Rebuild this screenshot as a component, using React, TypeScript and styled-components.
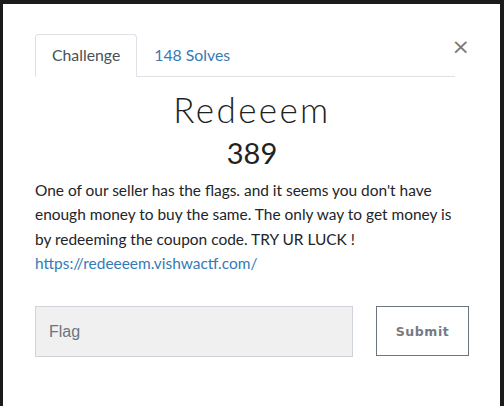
import React from 'react';
import styled, { createGlobalStyle } from 'styled-components';

const GlobalStyle = createGlobalStyle`
  html, body {
    margin: 0;
    padding: 0;
    background: #1b1b1b;
  }
  * {
    box-sizing: border-box;
  }
`;

// Component styles

const Backdrop = styled.div`
  width: 504px;
  height: 406px;
  padding: 4px 4px 0 3px;
  overflow: hidden;
`;

const Modal = styled.div`
  position: relative;
  height: 100%;
  background: #fff;
  padding: 30px 31px 0 32px;
  font-family: Lato, "Open Sans", sans-serif;
  color: #212529;
`;

const CloseButton = styled.button`
  position: absolute;
  top: 32px;
  right: 30px;
  border: 0;
  background: transparent;
  padding: 0;
  font-family: "DejaVu Sans", sans-serif;
  font-size: 22px;
  line-height: 1;
  color: #7a7a7a;
  cursor: pointer;
`;

const TabList = styled.ul`
  display: flex;
  margin: 0 14px 0 0;
  padding: 0;
  list-style: none;
  border-bottom: 1px solid #dee2e6;
`;

interface TabProps {
  active?: boolean;
}

const Tab = styled.li<TabProps>`
  margin-bottom: -1px;
  padding: 10px 16px 11px;
  font-size: 15.8px;
  line-height: 20px;
  border: 1px solid ${(p) => (p.active ? '#dee2e6' : 'transparent')};
  border-bottom-color: ${(p) => (p.active ? '#fff' : 'transparent')};
  border-radius: 4px 4px 0 0;
  background: ${(p) => (p.active ? '#fff' : 'transparent')};
  color: ${(p) => (p.active ? '#495057' : '#337ab7')};
  cursor: pointer;
`;

const Body = styled.div`
  display: flex;
  flex-direction: column;
  align-items: center;
  padding-top: 11px;
`;

const Title = styled.h3`
  margin: 0;
  font-size: 35px;
  font-weight: 300;
  letter-spacing: 2.4px;
  line-height: 42px;
  color: #1f1f1f;
`;

const Points = styled.h4`
  margin: 6px 0 0;
  font-size: 29px;
  font-weight: 400;
  line-height: 34px;
  color: #222;
`;

const Description = styled.p`
  align-self: stretch;
  margin: 8px 0 0;
  font-size: 15.45px;
  line-height: 24.3px;
`;

const Link = styled.a`
  color: #337ab7;
  text-decoration: none;
`;

const FlagForm = styled.form`
  display: flex;
  align-items: flex-start;
  gap: 23px;
  margin-top: 31px;
`;

const FlagInput = styled.input`
  width: 318px;
  height: 51px;
  flex-shrink: 0;
  padding: 0 13px;
  border: 1px solid #ced4da;
  border-radius: 0;
  background: #f0f0f0;
  font-family: "Liberation Sans", Arial, sans-serif;
  font-size: 16px;
  color: #495057;
  outline: none;

  &::placeholder {
    color: #6c757d;
  }
`;

const SubmitButton = styled.button`
  width: 93px;
  height: 50px;
  flex-shrink: 0;
  border: 1px solid #6c757d;
  border-radius: 0;
  background: #fff;
  font-family: "DejaVu Sans", Verdana, sans-serif;
  font-size: 12.5px;
  font-weight: 700;
  letter-spacing: 0.6px;
  color: #737b83;
  cursor: pointer;
`;

export default function App() {
  return (
    <>
      <GlobalStyle />
      <Backdrop>
        <Modal>
          <CloseButton aria-label="Close">×</CloseButton>
          <TabList>
            <Tab active>Challenge</Tab>
            <Tab>148 Solves</Tab>
          </TabList>
          <Body>
            <Title>Redeeem</Title>
            <Points>389</Points>
            <Description>
              One of our seller has the flags. and it seems you don't have enough money to buy
              the same. The only way to get money is by redeeming the coupon code. TRY UR LUCK !
              <br />
              <Link href="#">https://redeeeem.vishwactf.com/</Link>
            </Description>
          </Body>
          <FlagForm onSubmit={(e) => e.preventDefault()}>
            <FlagInput placeholder="Flag" />
            <SubmitButton type="submit">Submit</SubmitButton>
          </FlagForm>
        </Modal>
      </Backdrop>
    </>
  );
}
